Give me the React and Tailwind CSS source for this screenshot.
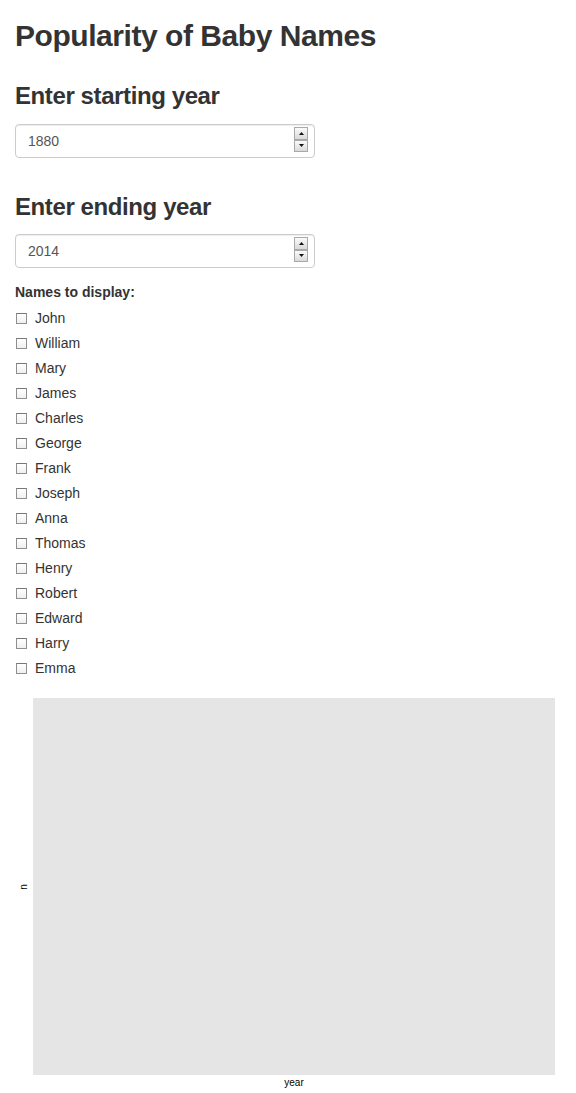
import React from "react";

const names = [
  "John",
  "William",
  "Mary",
  "James",
  "Charles",
  "George",
  "Frank",
  "Joseph",
  "Anna",
  "Thomas",
  "Henry",
  "Robert",
  "Edward",
  "Harry",
  "Emma",
];

const SpinButton = ({ up }) => (
  <span className="w-[14px] h-[12.5px] flex items-center justify-center border border-[#a9a9a9] bg-gradient-to-b from-[#fbfbfb] to-[#d9d9d9]">
    <svg width="5" height="3" viewBox="0 0 5 3">
      {up ? (
        <polygon points="2.5,0 5,3 0,3" fill="#111" />
      ) : (
        <polygon points="0,0 5,0 2.5,3" fill="#111" />
      )}
    </svg>
  </span>
);

const YearInput = ({ value }) => (
  <div className="relative w-[300px] h-[34px] border border-[#cccccc] rounded-[4px] bg-white shadow-[inset_0_1px_1px_rgba(0,0,0,0.075)] flex items-center pl-[12px]">
    <span className="text-[14px] text-[#555555]">{value}</span>
    {/* stepper arrows */}
    <div className="absolute right-[6px] top-[2px] flex flex-col">
      <SpinButton up />
      <SpinButton />
    </div>
  </div>
);

export default function App() {
  return (
    <div
      className="min-h-[1093px] bg-white px-[15px] text-[#333333]"
      style={{ fontFamily: '"Liberation Sans", Arial, sans-serif' }}
    >
      <h2 className="pt-[19px] text-[30px] leading-[33px] font-bold tracking-[-0.45px]">
        Popularity of Baby Names
      </h2>

      <h3 className="mt-[31px] text-[24px] leading-[26px] font-bold tracking-[-0.4px]">
        Enter starting year
      </h3>
      <div className="mt-[15px]">
        <YearInput value="1880" />
      </div>

      <h3 className="mt-[36px] text-[24px] leading-[26px] font-bold tracking-[-0.4px]">
        Enter ending year
      </h3>
      <div className="mt-[14px]">
        <YearInput value="2014" />
      </div>

      <div className="mt-[14px] text-[14px] leading-[20px] font-bold">
        Names to display:
      </div>
      <div className="mt-[6px] flex flex-col gap-[5px]">
        {names.map((name) => (
          <label key={name} className="flex items-center h-[20px] text-[14px]">
            <span className="ml-[1px] w-[11px] h-[11px] border border-[#8f8f8f] border-t-[#777] bg-gradient-to-b from-white to-[#f0f0f0] shrink-0" />
            <span className="ml-[8px]">{name}</span>
          </label>
        ))}
      </div>

      {/* Plot */}
      <div className="mt-[20px] flex">
        <div className="w-[18px] flex items-center justify-center">
          <span className="-rotate-90 text-[10px] leading-none text-black">n</span>
        </div>
        <div className="flex-1 mr-[6px] h-[377px] bg-[#e5e5e5]" />
      </div>
      <div className="flex">
        <div className="w-[18px]" />
        <div className="flex-1 mr-[6px] text-center text-[10px] leading-[12px] pt-[2px] text-black">
          year
        </div>
      </div>
    </div>
  );
}
